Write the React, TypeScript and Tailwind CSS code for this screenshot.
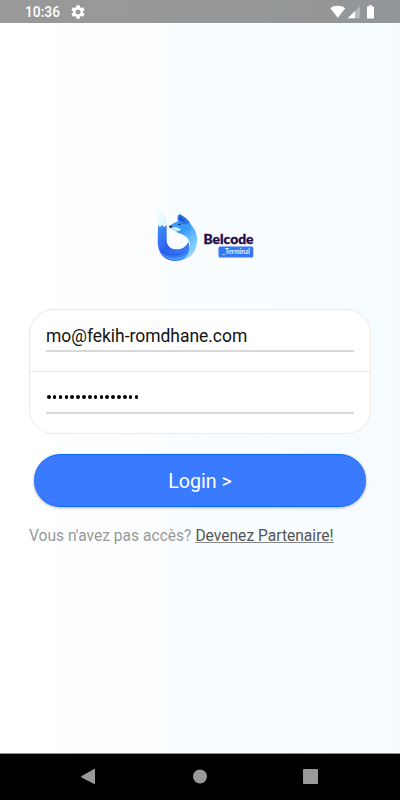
import { useState } from 'react'

function StatusBar() {
  return (
    <header className="flex h-[23px] shrink-0 items-center justify-between bg-gradient-to-r from-[#999999] to-[#939698] pr-[25px] pl-[25px] text-white">
      <div className="flex items-center gap-[11px]">
        <span className="pt-px text-[13.8px] leading-[22px] font-medium">10:36</span>
        <svg className="size-[14px]" viewBox="2 2 20 20" fill="currentColor">
          <path d="M19.14 12.94c.04-.3.06-.61.06-.94 0-.32-.02-.64-.07-.94l2.03-1.58c.18-.14.23-.41.12-.61l-1.92-3.32c-.12-.22-.37-.29-.59-.22l-2.39.96c-.5-.38-1.03-.7-1.62-.94l-.36-2.54c-.04-.24-.24-.41-.48-.41h-3.84c-.24 0-.43.17-.47.41l-.36 2.54c-.59.24-1.13.57-1.62.94l-2.39-.96c-.22-.08-.47 0-.59.22L2.74 8.87c-.12.21-.08.47.12.61l2.03 1.58c-.05.3-.09.63-.09.94s.02.64.07.94l-2.03 1.58c-.18.14-.23.41-.12.61l1.92 3.32c.12.22.37.29.59.22l2.39-.96c.5.38 1.03.7 1.62.94l.36 2.54c.05.24.24.41.48.41h3.84c.24 0 .44-.17.47-.41l.36-2.54c.59-.24 1.13-.56 1.62-.94l2.39.96c.22.08.47 0 .59-.22l1.92-3.32c.12-.22.07-.47-.12-.61l-2.01-1.58zM12 15.6c-1.98 0-3.6-1.62-3.6-3.6s1.62-3.6 3.6-3.6 3.6 1.62 3.6 3.6-1.62 3.6-3.6 3.6z" />
        </svg>
      </div>
      <svg className="h-[14px] w-[45px]" viewBox="0 0 45 14" fill="currentColor">
        <path d="M.4 3.2C4.6 0 11 0 15.2 3.2L7.8 12.7z" />
        <path opacity=".35" d="M17.8 13.3 29.8 1.3v12z" />
        <path d="M17.8 13.3 25 6.1v7.2z" />
        <path d="M38.7.3h3.2v1.3h1.4q.7 0 .7.7v10.6q0 .7-.7.7h-5.6q-.7 0-.7-.7V2.3q0-.7.7-.7h1z" />
      </svg>
    </header>
  )
}

function FoxMark() {
  return (
    <svg className="h-[70px] w-[60px]" viewBox="0 0 180 210">
      <defs>
        <linearGradient id="body" x1="0" y1="0" x2="1" y2="1">
          <stop offset="0" stopColor="#3f94fa" />
          <stop offset=".45" stopColor="#2c60ef" />
          <stop offset="1" stopColor="#418bf8" />
        </linearGradient>
        <linearGradient id="back" x1="0" y1="0" x2=".6" y2="1">
          <stop offset="0" stopColor="#2f84f2" />
          <stop offset=".45" stopColor="#53aefc" />
          <stop offset="1" stopColor="#9edcff" />
        </linearGradient>
        <linearGradient id="tail" x1="0" y1="0" x2="1" y2="1">
          <stop offset="0" stopColor="#ffffff" />
          <stop offset="1" stopColor="#dcf4fb" />
        </linearGradient>
      </defs>
      <path fill="url(#tail)" d="M10 21C37 20 64 32 65 62V82H39V58C39 41 28 27 10 21Z" />
      <path fill="url(#back)" d="M112 76L136 72C150 86 157 102 156 122C156 158 131 182 97 182C121 173 137 153 135 131C132 114 119 103 97 98Z" />
      <path fill="url(#body)" d="M39 76L45 82L51 74L57 82L65 76V119C65 137 77 148 94 148C111 148 124 140 130 125C140 148 127 181 94 183C60 184 39 162 38 127Z" />
      <path fill="#2451de" d="M48 149C66 165 96 167 119 153C104 170 69 174 48 149Z" opacity=".55" />
      <path fill="#57b6ff" d="M48 157C71 178 103 179 128 160C108 187 70 188 48 157Z" opacity=".6" />
      <path fill="#3a9bf8" d="M73 79C82 70 92 67 100 62L99 46L104 43C119 50 133 61 139 76C134 94 117 101 100 98C92 93 84 88 74 83Z" />
      <path fill="#2b6fe6" d="M98 61Q96 49 103 43Q122 51 134 68L117 74Z" />
      <path fill="#1f4fb4" d="M103 48Q113 53 119 65L105 61Z" />
      <path fill="#c9ebff" d="M77 83Q94 78 108 88Q101 98 87 90Z" />
      <path fill="#141f48" d="M73 77L82 77L79 84L73 82ZM98 72L109 71Q104 78 98 72Z" />
    </svg>
  )
}

function Logo() {
  return (
    <div className="mt-[177px] ml-[145px] flex h-[70px]">
      <FoxMark />
      <div className="-ml-[2px] pt-[31px] font-[Lato,sans-serif]">
        <svg className="h-[32px] w-[54px]" viewBox="0 0 54 32">
          <text x=".5" y="13" fontSize="12.6" fontWeight="900" textLength="50" lengthAdjust="spacingAndGlyphs" fill="#230b4b" stroke="#230b4b" strokeWidth=".3">Belcode</text>
          <rect x="15.5" y="15.6" width="34.8" height="10.9" rx="1.6" fill="#3478f7" />
          <text x="19" y="23.4" fontSize="6.6" fontWeight="700" textLength="28" lengthAdjust="spacingAndGlyphs" fill="#e5f0ff">_Terminal</text>
        </svg>
      </div>
    </div>
  )
}

function LoginForm() {
  const [email, setEmail] = useState('mo@fekih-romdhane.com')

  return (
    <form className="mx-[29px] mt-[39px] h-[125px] overflow-hidden rounded-[25px] border border-[#f0e9df] bg-white px-4">
      <div className="-mx-4 h-[62px] border-b border-[#f0e9df] px-4 pt-[10px]">
        <input
          className="block h-[32px] w-full border-b-2 border-[#d8d8d8] bg-transparent pt-[2px] text-[17.45px] text-[#111] outline-none"
          value={email}
          onChange={(e) => setEmail(e.target.value)}
        />
      </div>
      <div className="flex h-[42px] items-center border-b-2 border-[#d8d8d8] pt-[10px]">
        <span className="flex gap-[2.25px] pl-[1px]">
          {Array.from({ length: 16 }, (_, i) => (
            <span key={i} className="h-[3.6px] w-[3.6px] rounded-full bg-black" />
          ))}
        </span>
      </div>
    </form>
  )
}

function NavBar() {
  return (
    <nav className="h-[47px] shrink-0 border-t border-[#8e9090] bg-black">
      <svg className="h-[46px] w-full" viewBox="0 0 400 46" fill="#999999">
        <path d="M81.6 21.9 94.2 14.9q.8-.4.8.5v14.2q0 .9-.8.4L81.6 23.5q-1-.8 0-1.6z" />
        <circle cx="200" cy="22.5" r="7" />
        <rect x="303" y="15" width="15" height="15" rx="1" />
      </svg>
    </nav>
  )
}

export default function App() {
  return (
    <div className="flex h-[800px] w-[400px] flex-col overflow-hidden bg-gradient-to-r from-white to-[#f5fbff] font-[Roboto,sans-serif]">
      <StatusBar />
      <main className="flex-1">
        <Logo />
        <LoginForm />
        <button className="mx-[34px] mt-[20px] block h-[53px] w-[332px] rounded-[27px] border-y border-[#0b6bff] bg-[#3a7aff] pt-[2px] text-[19.7px] text-white shadow-[0_1px_3px_rgba(0,0,0,0.3)]">
          Login &gt;
        </button>
        <p className="mt-[19px] ml-[29px] text-[15.6px] leading-[20px] whitespace-nowrap text-[#999]">
          Vous n'avez pas accès?{' '}
          <a className="text-[#555] underline decoration-[#888] decoration-1 underline-offset-1">Devenez Partenaire!</a>
        </p>
      </main>
      <NavBar />
    </div>
  )
}
